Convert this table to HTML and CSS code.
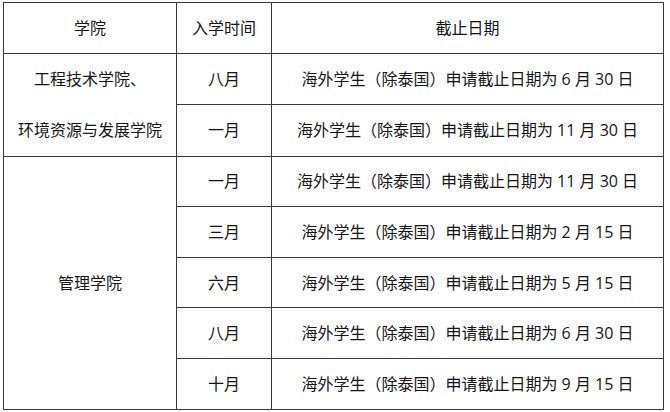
FILE: index.html
```html
<!DOCTYPE html>
<html lang="zh-CN">
<head>
<meta charset="utf-8">
<link rel="stylesheet" href="styles.css">
</head>
<body>
<table class="grid">
  <colgroup>
    <col class="c1"><col class="c2"><col class="c3">
  </colgroup>
  <tr class="head">
    <td>学院</td><td>入学时间</td><td>截止日期</td>
  </tr>
  <tr>
    <td rowspan="2" class="school"><span class="ln">工程技术学院、</span><span class="ln">环境资源与发展学院</span></td>
    <td>八月</td><td>海外学生（除泰国）申请截止日期为 6 月 30 日</td>
  </tr>
  <tr>
    <td>一月</td><td>海外学生（除泰国）申请截止日期为 11 月 30 日</td>
  </tr>
  <tr>
    <td rowspan="5">管理学院</td>
    <td>一月</td><td>海外学生（除泰国）申请截止日期为 11 月 30 日</td>
  </tr>
  <tr>
    <td>三月</td><td>海外学生（除泰国）申请截止日期为 2 月 15 日</td>
  </tr>
  <tr>
    <td>六月</td><td>海外学生（除泰国）申请截止日期为 5 月 15 日</td>
  </tr>
  <tr>
    <td>八月</td><td>海外学生（除泰国）申请截止日期为 6 月 30 日</td>
  </tr>
  <tr>
    <td>十月</td><td>海外学生（除泰国）申请截止日期为 9 月 15 日</td>
  </tr>
</table>
</body>
</html>
```
FILE: styles.css
```css
html, body {
  margin: 0;
  padding: 0;
  background: #ffffff;
}
body {
  padding: 2px 0 0 3px;
  font-family: "Open Sans", "Noto Sans CJK SC", sans-serif;
  font-size: 16px;
  color: #151515;
}
.grid {
  border-collapse: collapse;
  table-layout: fixed;
  width: 661px;
}
.c1 { width: 173px; }
.c2 { width: 95px; }
.c3 { width: auto; }
.grid td {
  border: 1px solid #3a3a3a;
  height: 49.6px;
  padding: 0;
  text-align: center;
  vertical-align: middle;
  line-height: 20px;
  white-space: nowrap;
}
.grid .school {
  line-height: 51px;
}
.ln {
  display: block;
}
```
